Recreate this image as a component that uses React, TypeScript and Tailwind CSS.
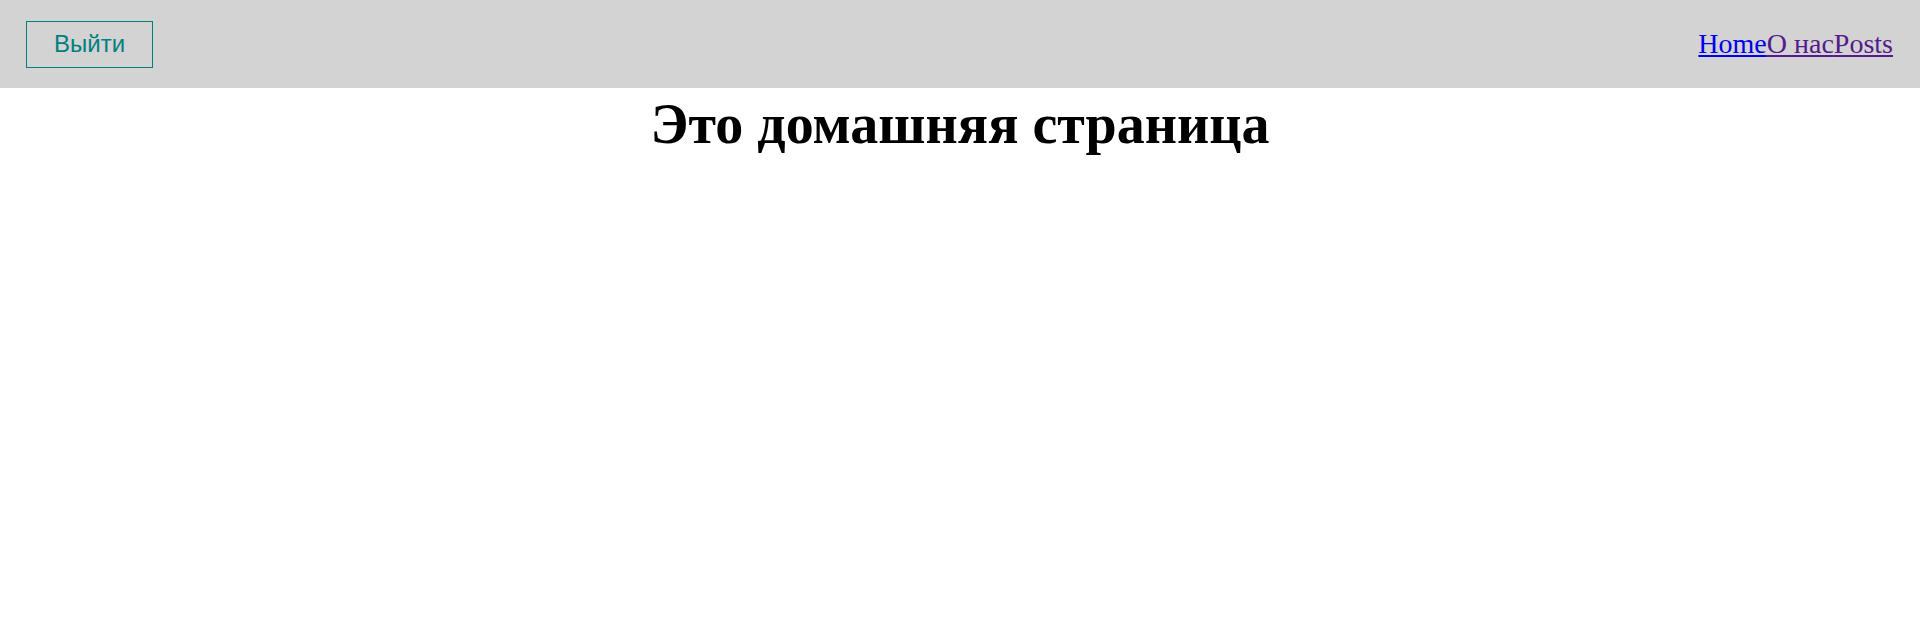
export default function App() {
  return (
    <div className="min-h-screen bg-white">
      <header className="flex h-[88px] items-center justify-between bg-[#d3d3d3] pl-[26px] pr-[27px]">
        <button className="h-[47px] w-[127px] border border-[#008080] bg-transparent text-[24px] text-[#008080] [font-family:'Liberation_Sans',Arial,sans-serif]">
          Выйти
        </button>
        <nav className="flex text-[28px] leading-normal [font-family:'Liberation_Serif','Times_New_Roman',serif]">
          <a href="#" className="text-[#0000ee] underline">Home</a>
          <a href="#" className="text-[#551a8b] underline">О нас</a>
          <a href="#" className="text-[#551a8b] underline">Posts</a>
        </nav>
      </header>
      <h1 className="mt-[12px] text-center text-[56px] font-bold leading-[48px] text-black [font-family:'Liberation_Serif','Times_New_Roman',serif]">
        Это домашняя страница
      </h1>
    </div>
  );
}
